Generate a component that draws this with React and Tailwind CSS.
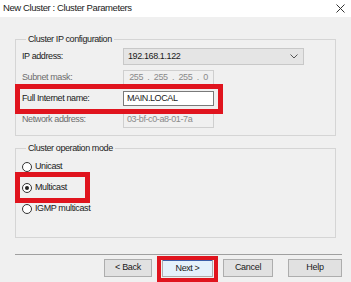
import React from "react";

function Row({ label, children, dim }) {
  return (
    <div className="flex items-center h-[17px]">
      <div className={"w-[101px] shrink-0 " + (dim ? "text-[#6d6d6d]" : "text-[#1a1a1a]")}>{label}</div>
      {children}
    </div>
  );
}

function Radio({ label, checked }) {
  return (
    <div className="flex items-center h-[17px] gap-[3px]">
      <span className="shrink-0 w-[10px] h-[10px] rounded-full border border-[#333] bg-white flex items-center justify-center">
        {checked && <span className="w-[4px] h-[4px] rounded-full bg-[#222]" />}
      </span>
      <span>{label}</span>
    </div>
  );
}

function Btn({ children }) {
  return (
    <button className="w-full h-[18px] bg-[#e1e1e1] border border-[#adadad] text-[9px] tracking-[-0.3px] text-[#1a1a1a]">
      {children}
    </button>
  );
}

export default function App() {
  return (
    <div
      className="w-[351px] h-[282px] bg-[#f0f0f0] flex flex-col text-[9px] tracking-[-0.4px] text-[#1a1a1a] overflow-hidden"
      style={{ fontFamily: '"Liberation Sans", Arial, sans-serif' }}
    >
      {/* title bar */}
      <div className="h-[17px] bg-white flex items-center justify-between pl-[3px] pr-[6px]">
        <span className="text-[9.5px] text-[#222]">New Cluster :  Cluster Parameters</span>
        <svg width="9" height="9" viewBox="0 0 9 9">
          <path d="M0.5 0.5 L8.5 8.5 M8.5 0.5 L0.5 8.5" stroke="#333" strokeWidth="1" />
        </svg>
      </div>

      <div className="pl-[15px] pr-[15px] pt-[17px] flex flex-col">
        <fieldset className="border border-[#d5d5d5] h-[102px] pl-[6px] pt-[2px]">
          <legend className="ml-[4px] px-[2px] text-[#222] leading-[11px]">Cluster IP configuration</legend>
          <div className="flex flex-col gap-[4px] pt-[1px]">
            <Row label="IP address:">
              <div className="w-[181px] h-[17px] bg-[#e5e5e5] border border-[#c8c8c8] flex items-center justify-between pl-[4px] pr-[5px]">
                <span>192.168.1.122</span>
                <svg width="8" height="5" viewBox="0 0 8 5">
                  <path d="M0.5 0.5 L4 4 L7.5 0.5" stroke="#555" fill="none" strokeWidth="1" />
                </svg>
              </div>
            </Row>
            <Row label="Subnet mask:" dim>
              <div className="w-[91px] h-[16px] border border-[#cfcfcf] flex items-center justify-around px-[3px] text-[#8a8a8a]">
                <span>255</span>.<span>255</span>.<span>255</span>.<span>0</span>
              </div>
            </Row>
            <div className="relative">
              <Row label="Full Internet name:">
                <div className="w-[91px] h-[15px] bg-white border border-[#7a7a7a] flex items-center pl-[3px]">
                  MAIN.LOCAL
                </div>
              </Row>
              <div className="absolute left-[-7px] right-[112px] top-[-6px] bottom-[-7px] border-[5px] border-[#e0141e]" />
            </div>
            <Row label="Network address:" dim>
              <div className="w-[91px] h-[16px] border border-[#cfcfcf] flex items-center pl-[3px] text-[#8a8a8a]">
                03-bf-c0-a8-01-7a
              </div>
            </Row>
          </div>
        </fieldset>

        <fieldset className="mt-[7px] border border-[#d5d5d5] h-[95px] pl-[6px]">
          <legend className="ml-[4px] px-[2px] text-[#222] leading-[11px]">Cluster operation mode</legend>
          <div className="flex flex-col gap-[4px] pt-[4px]">
            <Radio label="Unicast" />
            <div className="relative">
              <Radio label="Multicast" checked />
              <div className="absolute left-[-7px] w-[75px] top-[-7px] bottom-[-7px] border-[5px] border-[#e0141e]" />
            </div>
            <Radio label="IGMP multicast" />
          </div>
        </fieldset>
      </div>

      <div className="mt-[16px] ml-[15px] mr-[9px] border-t border-[#a0a0a0]" />

      <div className="flex justify-end pr-[9px] pt-[4px]">
        <div className="w-[48px] flex"><Btn>&lt; Back</Btn></div>
        <div className="relative ml-[10px]">
          <div className="w-[51px] h-[18px] bg-[#e5f1fb] border-t-[2px] border-t-[#3c5ea8] border-x border-b border-[#adadad] flex items-center justify-center">
            Next &gt;
          </div>
          <div className="absolute left-[-5px] right-[-5px] top-[-3px] bottom-[-5px] border-[4px] border-[#e0141e]" />
        </div>
        <div className="w-[50px] flex ml-[10px]"><Btn>Cancel</Btn></div>
        <div className="w-[54px] flex ml-[15px]"><Btn>Help</Btn></div>
      </div>
    </div>
  );
}
